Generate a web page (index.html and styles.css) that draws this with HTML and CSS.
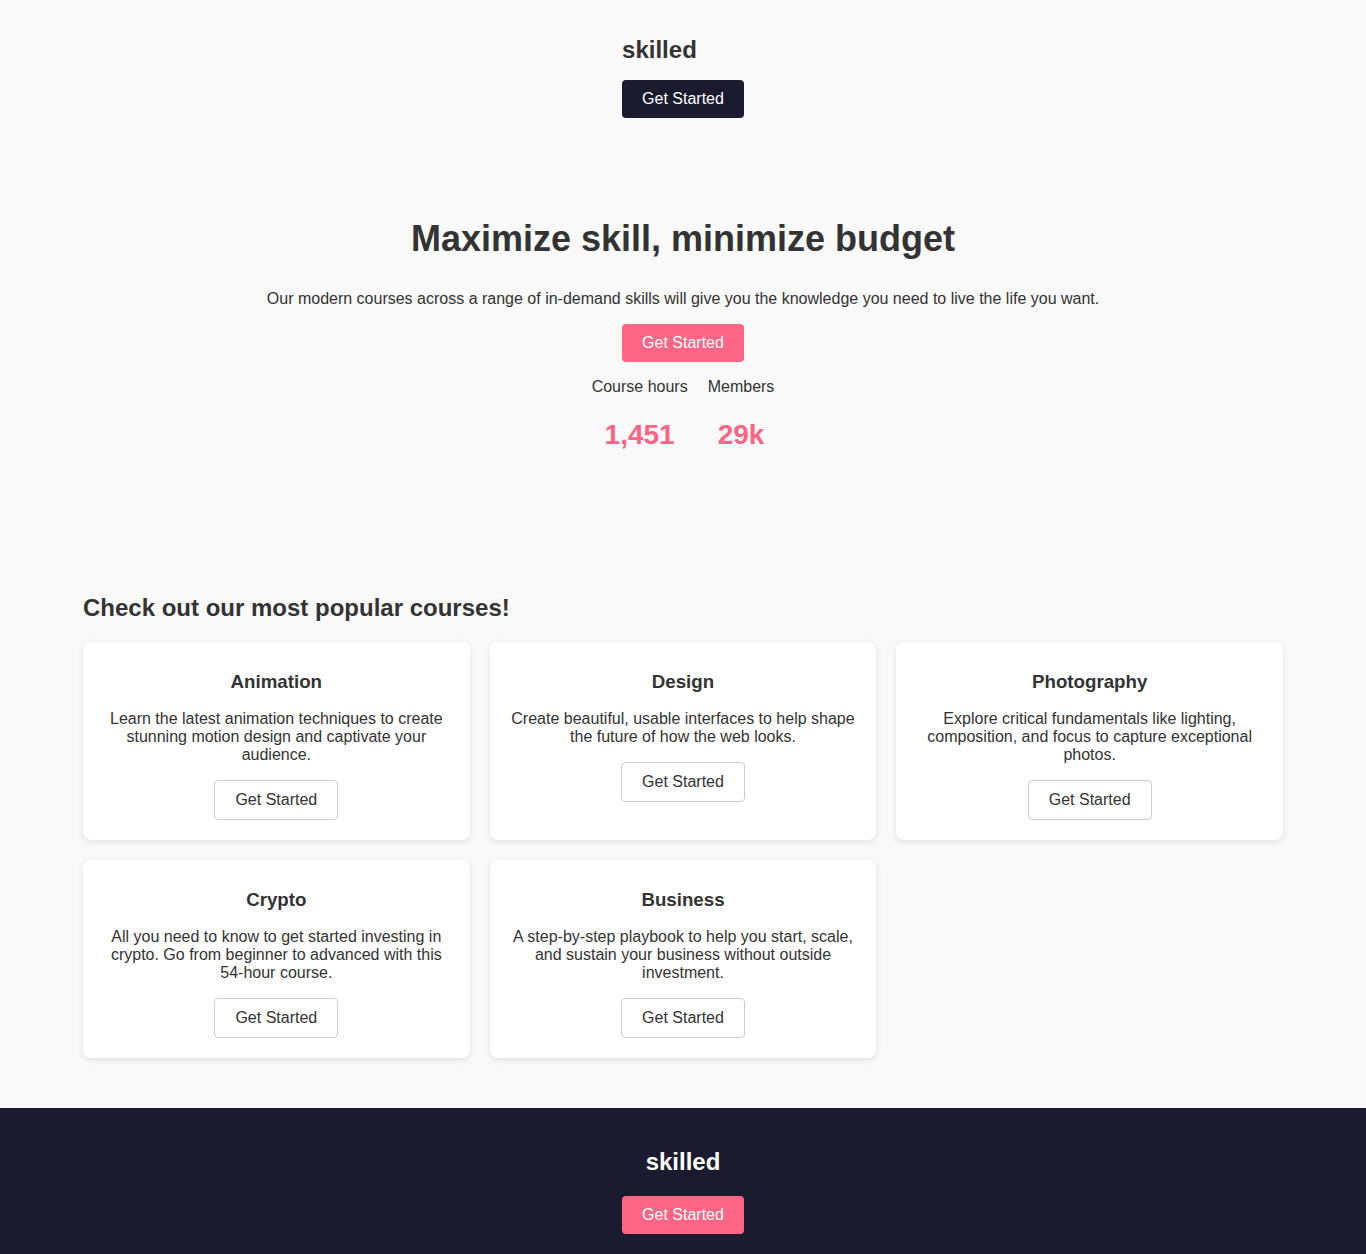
FILE: index.html
```html
<!DOCTYPE html>
<html lang="en">
<head>
<meta charset="utf-8">
<title>skilled</title>
<link rel="stylesheet" href="styles.css">
</head>
<body>
<header class="top">
  <div class="top-inner">
    <div class="logo">skilled</div>
    <a class="btn btn-dark" href="#">Get Started</a>
  </div>
</header>

<section class="hero">
  <h1 class="hero-title">Maximize skill, minimize budget</h1>
  <p class="hero-text">Our modern courses across a range of in-demand skills will give you the knowledge you need to live the life you want.</p>
  <a class="btn btn-pink" href="#">Get Started</a>
  <div class="stats">
    <div class="stat">
      <div class="stat-label">Course hours</div>
      <div class="stat-value">1,451</div>
    </div>
    <div class="stat">
      <div class="stat-label">Members</div>
      <div class="stat-value">29k</div>
    </div>
  </div>
</section>

<section class="courses">
  <h2 class="courses-title">Check out our most popular courses!</h2>
  <div class="grid">
    <div class="card">
      <h3 class="card-title">Animation</h3>
      <p class="card-text">Learn the latest animation techniques to create stunning motion design and captivate your audience.</p>
      <a class="btn btn-outline" href="#">Get Started</a>
    </div>
    <div class="card">
      <h3 class="card-title">Design</h3>
      <p class="card-text">Create beautiful, usable interfaces to help shape the future of how the web looks.</p>
      <a class="btn btn-outline" href="#">Get Started</a>
    </div>
    <div class="card">
      <h3 class="card-title">Photography</h3>
      <p class="card-text">Explore critical fundamentals like lighting, composition, and focus to capture exceptional photos.</p>
      <a class="btn btn-outline" href="#">Get Started</a>
    </div>
    <div class="card">
      <h3 class="card-title">Crypto</h3>
      <p class="card-text">All you need to know to get started investing in crypto. Go from beginner to advanced with this 54-hour course.</p>
      <a class="btn btn-outline" href="#">Get Started</a>
    </div>
    <div class="card">
      <h3 class="card-title">Business</h3>
      <p class="card-text">A step-by-step playbook to help you start, scale, and sustain your business without outside investment.</p>
      <a class="btn btn-outline" href="#">Get Started</a>
    </div>
  </div>
</section>

<footer class="footer">
  <div class="logo logo-light">skilled</div>
  <a class="btn btn-pink" href="#">Get Started</a>
</footer>
</body>
</html>
```

FILE: styles.css
```css
* {
  box-sizing: border-box;
}

html, body {
  margin: 0;
  padding: 0;
}

body {
  background: #f9f9f9;
  color: #333333;
  font-family: "Liberation Sans", Arial, sans-serif;
  font-size: 16px;
}

.btn {
  display: inline-block;
  font-size: 16px;
  line-height: 18px;
  padding: 10px 20px;
  border-radius: 4px;
  text-decoration: none;
  white-space: nowrap;
}

.btn-dark {
  background: #1b1b2f;
  color: #ffffff;
}

.btn-pink {
  background: #ff6584;
  color: #ffffff;
}

.btn-outline {
  background: #ffffff;
  color: #333333;
  border: 1px solid #cccccc;
}

.logo {
  font-size: 24px;
  font-weight: 700;
  line-height: 28px;
  color: #333333;
}

.logo-light {
  color: #ffffff;
}

/* header */
.top {
  display: flex;
  justify-content: center;
  padding-top: 36px;
}

.top-inner {
  display: flex;
  flex-direction: column;
  align-items: flex-start;
  gap: 16px;
}

/* hero */
.hero {
  display: flex;
  flex-direction: column;
  align-items: center;
  text-align: center;
  padding-top: 100px;
}

.hero-title {
  margin: 0;
  font-size: 36px;
  line-height: 41px;
  font-weight: 700;
}

.hero-text {
  margin: 31px 0 16px;
  line-height: 18px;
}

.stats {
  display: flex;
  gap: 20px;
  margin-top: 16px;
}

.stat {
  display: flex;
  flex-direction: column;
  align-items: center;
  gap: 23px;
}

.stat-label {
  line-height: 18px;
}

.stat-value {
  font-size: 28px;
  line-height: 32px;
  font-weight: 700;
  color: #ff6584;
}

/* courses */
.courses {
  width: 1200px;
  margin: 143px auto 0;
}

.courses-title {
  margin: 0 0 20px;
  font-size: 24px;
  line-height: 28px;
  font-weight: 700;
}

.grid {
  display: grid;
  grid-template-columns: repeat(3, 1fr);
  gap: 20px;
}

.card {
  background: #ffffff;
  border-radius: 8px;
  box-shadow: 0 2px 6px rgba(0, 0, 0, 0.1);
  padding: 29px 20px 20px;
  display: flex;
  flex-direction: column;
  align-items: center;
  text-align: center;
  min-height: 198px;
}

.card-title {
  margin: 0;
  font-size: 18.72px;
  line-height: 22px;
  font-weight: 700;
}

.card-text {
  margin: 17px 0 16px;
  line-height: 18px;
}

/* footer */
.footer {
  margin-top: 50px;
  background: #1b1b2f;
  display: flex;
  flex-direction: column;
  align-items: center;
  gap: 20px;
  padding: 40px 0 20px;
}
```
